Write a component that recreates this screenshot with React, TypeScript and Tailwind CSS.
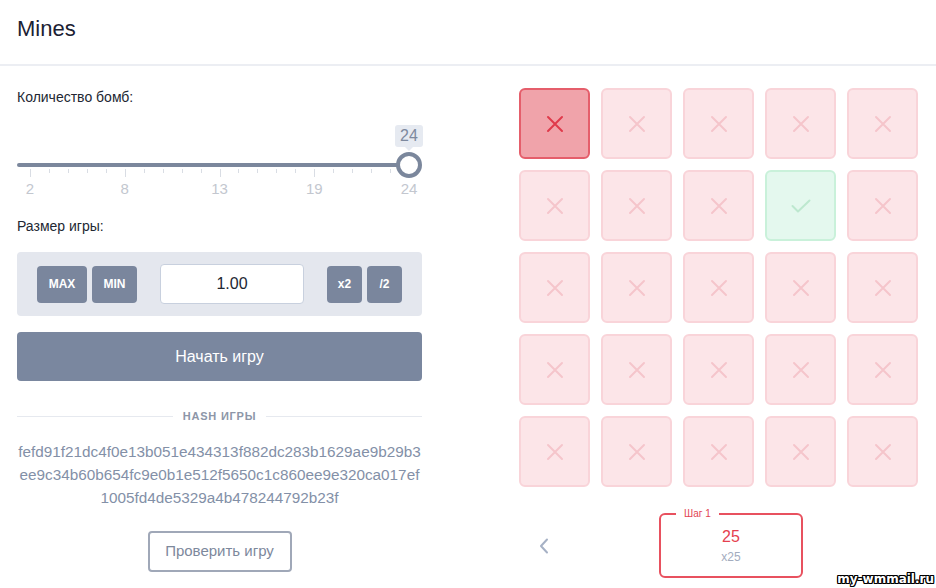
import React from "react";

const XIcon = ({ color }: { color: string }) => (
  <svg width="18" height="18" viewBox="0 0 18 18" fill="none">
    <path d="M2 2 L16 16 M16 2 L2 16" stroke={color} strokeWidth="2" strokeLinecap="round" />
  </svg>
);

const CheckIcon = ({ color }: { color: string }) => (
  <svg width="20" height="14" viewBox="0 0 20 14" fill="none">
    <path d="M1.5 7 L7 12.5 L18.5 1.5" stroke={color} strokeWidth="2" strokeLinecap="round" strokeLinejoin="round" />
  </svg>
);

const hashLines = [
  "fefd91f21dc4f0e13b051e434313f882dc283b1629ae9b29b3",
  "ee9c34b60b654fc9e0b1e512f5650c1c860ee9e320ca017ef",
  "1005fd4de5329a4b478244792b23f",
];

const labels = ["2", "8", "13", "19", "24"];

function Slider() {
  const start = 13;
  const end = 392;
  const ticks = Array.from({ length: 21 }, (_, i) => start + (i * (end - start)) / 20);
  return (
    <div className="relative h-[72px] w-full">
      <div className="absolute top-0 left-[378px] flex h-[22px] w-[28px] items-center justify-center rounded-[3px] bg-[#e6eaf1] text-[16px] text-[#7d899e]">
        24
      </div>
      <div className="absolute top-[22px] left-[388px] h-0 w-0 border-x-[4px] border-t-[4px] border-x-transparent border-t-[#e6eaf1]" />
      <div className="absolute top-[38px] left-0 h-[4px] w-[392px] rounded-full bg-[#7b879c]" />
      {ticks.map((x, i) => (
        <div
          key={i}
          className={`absolute top-[44px] w-px bg-[#d9dde4] ${i % 5 === 0 ? "h-[8px]" : "h-[4px]"}`}
          style={{ left: x }}
        />
      ))}
      {labels.map((l, i) => (
        <div
          key={l}
          className="absolute top-[56px] w-[30px] -translate-x-1/2 text-center text-[15px] leading-[16px] text-[#c3c7cf]"
          style={{ left: start + (i * (end - start)) / 4 }}
        >
          {l}
        </div>
      ))}
      <div className="absolute top-[27px] left-[379px] h-[26px] w-[26px] rounded-full border-[4px] border-[#7b879c] bg-white" />
    </div>
  );
}

function Cell({ kind }: { kind: "lose" | "x" | "win" }) {
  if (kind === "lose")
    return (
      <div className="flex h-[71px] w-[71px] items-center justify-center rounded-[6px] border-2 border-[#e55e6b] bg-[#f0a3aa]">
        <XIcon color="#e03a4b" />
      </div>
    );
  if (kind === "win")
    return (
      <div className="flex h-[71px] w-[71px] items-center justify-center rounded-[6px] border-2 border-[#c9f1da] bg-[#e4f8ee]">
        <CheckIcon color="#bde8cf" />
      </div>
    );
  return (
    <div className="flex h-[71px] w-[71px] items-center justify-center rounded-[6px] border-2 border-[#f9d4d9] bg-[#fce5e8]">
      <XIcon color="#f5c5cb" />
    </div>
  );
}

export default function App() {
  const cells = Array.from({ length: 25 }, (_, i) =>
    i === 0 ? "lose" : i === 8 ? "win" : "x"
  ) as ("lose" | "x" | "win")[];

  return (
    <div
      className="relative h-[588px] w-[936px] overflow-hidden bg-white"
      style={{ fontFamily: '"Liberation Sans", Arial, sans-serif' }}
    >
      <div className="flex h-[66px] items-center border-b-2 border-[#eceef3] pl-[17px] pb-[8px]">
        <span className="text-[22px] text-[#1b2133]">Mines</span>
      </div>

      <div className="flex pl-[17px]">
        <div className="flex w-[405px] flex-col">
          <div className="mt-[21px] text-[14px] leading-[20px] text-[#222732]">Количество бомб:</div>
          <div className="mt-[18px]">
            <Slider />
          </div>
          <div className="mt-[19px] text-[14px] leading-[20px] text-[#222732]">Размер игры:</div>
          <div className="mt-[16px] flex h-[64px] items-center rounded-[4px] bg-[#e4e7ee] px-[20px]">
            <div className="flex gap-[5px]">
              <button className="h-[37px] w-[50px] rounded-[4px] bg-[#7a869d] text-[12px] font-bold text-white">MAX</button>
              <button className="h-[37px] w-[45px] rounded-[4px] bg-[#7a869d] text-[12px] font-bold text-white">MIN</button>
            </div>
            <div className="ml-[23px] flex h-[40px] w-[144px] items-center justify-center rounded-[4px] border border-[#c8d0de] bg-white text-[16px] text-[#222732]">
              1.00
            </div>
            <div className="ml-[23px] flex gap-[5px]">
              <button className="h-[37px] w-[35px] rounded-[4px] bg-[#7a869d] text-[12px] font-bold text-white">x2</button>
              <button className="h-[37px] w-[35px] rounded-[4px] bg-[#7a869d] text-[12px] font-bold text-white">/2</button>
            </div>
          </div>
          <button className="mt-[16px] h-[49px] w-full rounded-[4px] bg-[#7a879f] text-[16px] text-white">
            Начать игру
          </button>
          <div className="mt-[28px] flex h-[14px] items-center gap-[10px]">
            <div className="h-px flex-1 bg-[#e6e9ef]" />
            <span className="text-[11px] font-bold tracking-[0.8px] text-[#8d96a8]">HASH ИГРЫ</span>
            <div className="h-px flex-1 bg-[#e6e9ef]" />
          </div>
          <div className="mt-[17px] text-center text-[15.3px] leading-[23px] text-[#8390a7]">
            {hashLines.map((l) => (
              <div key={l}>{l}</div>
            ))}
          </div>
          <div className="mt-[22px] flex justify-center">
            <button className="h-[41px] w-[144px] rounded-[4px] border-2 border-[#a0a8b8] text-[15px] text-[#7d889c]">
              Проверить игру
            </button>
          </div>
        </div>

        <div className="ml-[97px] flex flex-col">
          <div className="mt-[22px] grid grid-cols-[repeat(5,71px)] gap-[11px]">
            {cells.map((k, i) => (
              <Cell key={i} kind={k} />
            ))}
          </div>
          <div className="mt-[26px] flex items-center">
            <div className="ml-[18px] flex h-[20px] w-[14px] items-center justify-center">
              <svg width="10" height="16" viewBox="0 0 10 16" fill="none">
                <path d="M8 1.5 L2 8 L8 14.5" stroke="#a6b1c5" strokeWidth="2" strokeLinecap="round" strokeLinejoin="round" />
              </svg>
            </div>
            <div className="relative ml-[108px] flex h-[65px] w-[144px] flex-col items-center rounded-[6px] border-2 border-[#e8515f]">
              <span className="absolute -top-[8px] left-[15px] bg-white px-[8px] text-[10px] leading-[14px] text-[#e24453]">Шаг 1</span>
              <span className="mt-[12px] text-[16px] leading-[20px] text-[#e5404f]">25</span>
              <span className="mt-[2px] text-[12px] leading-[16px] text-[#a3acbe]">x25</span>
            </div>
          </div>
        </div>
      </div>

      <div
        className="absolute right-[2px] bottom-[1px] text-[12px] font-bold leading-[15px] text-white"
        style={{
          fontFamily: '"DejaVu Sans", sans-serif',
          textShadow:
            "1px 0 0 #000, -1px 0 0 #000, 0 1px 0 #000, 0 -1px 0 #000, 1px 1px 0 #000, -1px -1px 0 #000, 1px -1px 0 #000, -1px 1px 0 #000",
        }}
      >
        my-wmmail.ru
      </div>
    </div>
  );
}
